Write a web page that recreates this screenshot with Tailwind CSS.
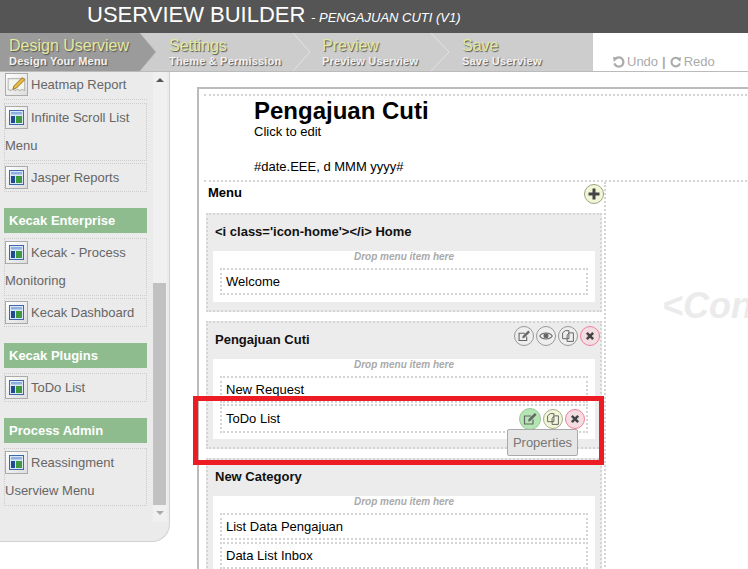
<!DOCTYPE html>
<html><head><meta charset="utf-8"><script src="https://cdn.jsdelivr.net/npm/@tailwindcss/browser@4"></script></head>
<body class="m-0 h-[569px] w-[748px] overflow-hidden bg-white font-['Liberation_Sans',Arial,sans-serif] relative">
<svg class="hidden">
<symbol id="win" viewBox="0 0 15 15"><rect x=".5" y=".5" width="14" height="14" fill="#dbe7f7" stroke="#3d68ad"/><rect x="2" y="2" width="11" height="2.5" fill="#8db0e0"/><rect x="2" y="6" width="4" height="7" fill="#1f4a94"/><rect x="7" y="6" width="6" height="7" fill="#3f9a3f"/></symbol>
<symbol id="edit" viewBox="0 0 20 20"><path d="M13 10.500V15H4.500V7H11" fill="none" stroke="#666" stroke-width="1.200"/><path d="M8 12.500l.6-2.400 6.200-6.200 1.800 1.800-6.200 6.200z" fill="#666"/></symbol>
<symbol id="eye" viewBox="0 0 20 20"><path d="M3 10c3-4.500 11-4.500 14 0-3 4.500-11 4.500-14 0z" fill="none" stroke="#666" stroke-width="1.200"/><circle cx="10" cy="9.800" r="2.800" fill="#666"/></symbol>
<symbol id="copy" viewBox="0 0 20 20"><path d="M4 6.500 7 4h4v9H4z" fill="none" stroke="#666" stroke-width="1.100"/><path d="M9 9l2.500-2.500H16V16H9z" fill="none" stroke="#666" stroke-width="1.100"/></symbol>
<symbol id="x" viewBox="0 0 20 20"><path d="M6.500 6.500l7 7m0-7l-7 7" stroke="#444" stroke-width="2.800" fill="none"/></symbol>
</svg>

<header class="h-[33px] bg-[#555] pl-[87px] text-white leading-[30px] whitespace-nowrap"><span class="text-[22px]">USERVIEW BUILDER</span><span class="text-[13px] italic ml-[2px]"> - PENGAJUAN CUTI (V1)</span></header>

<nav class="h-[39px] flex bg-[#cdcdcd] border-b border-[#bbb] text-[#e3ea9f] [text-shadow:1px_1px_1px_#555] whitespace-nowrap">
  <div class="relative w-[160px] pl-[9px] pt-[3px]">
    <svg class="absolute left-0 top-0" width="160" height="38"><path d="M0 0H140L156 19 140 38H0z" fill="#9b9b9b"/><path d="M140 0 156 19 140 38" fill="none" stroke="#bdbdbd"/></svg>
    <div class="relative text-base leading-[19px]">Design Userview</div><div class="relative text-[11px] font-bold tracking-[0.2px] leading-[13px] text-[#f2f2f2]">Design Your Menu</div>
  </div>
  <div class="relative w-[153px] pl-[9px] pt-[3px]">
    <svg class="absolute left-[133px] top-0" width="20" height="38"><path d="M0 0 17 19 0 38" fill="none" stroke="#e2e2e2"/></svg>
    <div class="text-base leading-[19px]">Settings</div><div class="text-[11px] font-bold tracking-[0.2px] leading-[13px] text-[#f2f2f2]">Theme &amp; Permission</div>
  </div>
  <div class="relative w-[140px] pl-[9px] pt-[3px]">
    <svg class="absolute left-[118px] top-0" width="20" height="38"><path d="M0 0 18 19 0 38" fill="none" stroke="#e2e2e2"/></svg>
    <div class="text-base leading-[19px]">Preview</div><div class="text-[11px] font-bold tracking-[0.2px] leading-[13px] text-[#f2f2f2]">Preview Userview</div>
  </div>
  <div class="w-[139px] pl-[9px] pt-[3px]">
    <div class="text-base leading-[19px]">Save</div><div class="text-[11px] font-bold tracking-[0.2px] leading-[13px] text-[#f2f2f2]">Save Userview</div>
  </div>
  <div class="flex-1 bg-white border-l border-[#ccc] pl-[19px] pt-[20px] flex items-center gap-[2px] text-[13px] text-[#aaa] font-normal [text-shadow:none] leading-[16px]">
    <svg width="13" height="13" viewBox="0 0 14 14"><path d="M3.500 3.200A5 5 0 1 1 2.500 8" fill="none" stroke="#aaa" stroke-width="2.400"/><path d="M1 1 6.500 2 2 6.500z" fill="#aaa"/></svg><span>Undo</span><span class="font-bold mx-[2px]">|</span>
    <svg width="12" height="13" viewBox="0 0 14 14"><path d="M10.500 3.200A5 5 0 1 0 11.500 8" fill="none" stroke="#aaa" stroke-width="2.400"/><path d="M13 1 7.500 2l4.500 4.500z" fill="#aaa"/></svg><span>Redo</span>
  </div>
</nav>

<main class="flex items-start">
  <aside class="relative w-[170px] h-[470px] bg-[#ebebeb] border-r border-b border-[#d2d2d2] rounded-br-[18px] overflow-hidden pl-[4px] text-[13px] text-[#666] leading-[28px] shrink-0">
    <div class="w-[143px] flex flex-col">
      <div class="h-[29px] border-b border-dotted border-[#ccc] -mt-[1px] flex items-center">
        <span class="w-[23px] h-[23px] ml-[1px] mr-[3px] -mt-[2px] border border-[#aaa] bg-gradient-to-br from-white to-[#ddd] inline-flex items-center justify-center"><svg width="20" height="20" viewBox="0 0 17 17"><path d="M1 4h14v10l-2-1-2 1-2-1-2 1-2-1-2 1-2-1z" fill="#f3f6ee" stroke="#bbb"/><path d="M6 10l7-7 2 2-7 7-3 1z" fill="#e8b93c" stroke="#8a6a20" stroke-width=".7"/></svg></span>Heatmap Report
      </div>
      <div class="h-[58px] mt-[3px] border border-dotted border-[#ccc] overflow-hidden"><span class="w-[23px] h-[23px] -mt-[2px] mr-[3px] border border-[#aaa] bg-gradient-to-br from-white to-[#ddd] inline-flex items-center justify-center align-middle"><svg width="15" height="15"><use href="#win"/></svg></span>Infinite Scroll List Menu</div>
      <div class="h-[29px] mt-[2px] border border-dotted border-[#ccc] overflow-hidden"><span class="w-[23px] h-[23px] -mt-[2px] mr-[3px] border border-[#aaa] bg-gradient-to-br from-white to-[#ddd] inline-flex items-center justify-center align-middle"><svg width="15" height="15"><use href="#win"/></svg></span>Jasper Reports</div>
      <div class="h-[25px] mt-[16px] bg-[#8fbc8f] text-white font-bold pl-[5px] leading-[25px]">Kecak Enterprise</div>
      <div class="h-[58px] mt-[5px] border border-dotted border-[#ccc] overflow-hidden"><span class="w-[23px] h-[23px] -mt-[2px] mr-[3px] border border-[#aaa] bg-gradient-to-br from-white to-[#ddd] inline-flex items-center justify-center align-middle"><svg width="15" height="15"><use href="#win"/></svg></span>Kecak - Process Monitoring</div>
      <div class="h-[29px] mt-[2px] border border-dotted border-[#ccc] overflow-hidden"><span class="w-[23px] h-[23px] -mt-[2px] mr-[3px] border border-[#aaa] bg-gradient-to-br from-white to-[#ddd] inline-flex items-center justify-center align-middle"><svg width="15" height="15"><use href="#win"/></svg></span>Kecak Dashboard</div>
      <div class="h-[25px] mt-[16px] bg-[#8fbc8f] text-white font-bold pl-[5px] leading-[25px]">Kecak Plugins</div>
      <div class="h-[29px] mt-[5px] border border-dotted border-[#ccc] overflow-hidden"><span class="w-[23px] h-[23px] -mt-[2px] mr-[3px] border border-[#aaa] bg-gradient-to-br from-white to-[#ddd] inline-flex items-center justify-center align-middle"><svg width="15" height="15"><use href="#win"/></svg></span>ToDo List</div>
      <div class="h-[25px] mt-[16px] bg-[#8fbc8f] text-white font-bold pl-[5px] leading-[25px]">Process Admin</div>
      <div class="h-[58px] mt-[5px] border border-dotted border-[#ccc] overflow-hidden"><span class="w-[23px] h-[23px] -mt-[2px] mr-[3px] border border-[#aaa] bg-gradient-to-br from-white to-[#ddd] inline-flex items-center justify-center align-middle"><svg width="15" height="15"><use href="#win"/></svg></span>Reassingment Userview Menu</div>
    </div>
    <div class="absolute left-[153px] top-0 w-[14px] h-[450px] bg-[#f0f0f0]">
      <div class="absolute left-[3px] top-[6px] w-0 h-0 border-x-[4px] border-x-transparent border-b-[4px] border-b-[#555]"></div>
      <div class="absolute left-0 top-[211px] w-[13px] h-[222px] bg-[#c1c1c1]"></div>
      <div class="absolute left-[3px] top-[439px] w-0 h-0 border-x-[4px] border-x-transparent border-t-[4px] border-t-[#aaa]"></div>
    </div>
  </aside>

  <section class="ml-[27px] mt-[15px] flex-1 h-[600px] border-l-2 border-t-2 border-[#bbb] pt-[5px] pl-[5px] text-black">
    <div class="h-[86px] border-t-2 border-dotted border-[#d4d4d4] pl-[50px] pt-[1px] text-[13px] leading-[14px]">
      <h1 class="text-2xl font-bold leading-[27px]">Pengajuan Cuti</h1>
      <p class="leading-[15px]">Click to edit</p>
      <p class="mt-[21px]">#date.EEE, d MMM yyyy#</p>
    </div>
    <div class="flex border-t-2 border-dotted border-[#d4d4d4]">
      <div class="relative w-[402px] h-[420px] border-r-2 border-dotted border-[#d4d4d4] pl-[2px] shrink-0">
        <div class="pl-[2px] pt-[1px] h-[31px] text-[13px] font-bold">Menu</div>
        <div class="absolute left-[380px] top-[2px] w-[20px] h-[20px] rounded-full border border-[#99a57f] bg-[#f2f6d8] flex items-center justify-center"><svg width="14" height="14" viewBox="0 0 14 14"><path d="M7 1.500v11M1.500 7h11" stroke="#444" stroke-width="3"/></svg></div>

        <div class="w-[396px] h-[99px] border-2 border-dotted border-[#d4d4d4] bg-[#ececec] px-[5px]">
          <div class="h-[36px] pl-[2px] pt-[9px] text-[13px] font-bold leading-[15px] text-[#111]">&lt;i class='icon-home'&gt;&lt;/i&gt; Home</div>
          <div class="h-[51px] bg-white px-[7px]">
            <div class="text-[10px] font-bold italic text-[#aaa] text-center leading-[12px]">Drop menu item here</div>
            <div class="h-[27px] mt-[5px] border-2 border-dotted border-[#d4d4d4] pl-[4px] text-[13px] leading-[23px]">Welcome</div>
          </div>
        </div>

        <div class="relative mt-[9px] w-[396px] h-[128px] border-2 border-dotted border-[#d4d4d4] bg-[#ececec] px-[5px]">
          <div class="h-[36px] pl-[2px] pt-[9px] text-[13px] font-bold leading-[15px] text-[#111]">Pengajuan Cuti</div>
          <div class="absolute left-[306px] top-[3px] flex gap-[2px]">
            <span class="w-[20px] h-[20px] rounded-full border border-[#999] bg-[#eee]"><svg width="18" height="18"><use href="#edit"/></svg></span>
            <span class="w-[20px] h-[20px] rounded-full border border-[#999] bg-[#eee]"><svg width="18" height="18"><use href="#eye"/></svg></span>
            <span class="w-[20px] h-[20px] rounded-full border border-[#999] bg-[#eee]"><svg width="18" height="18"><use href="#copy"/></svg></span>
            <span class="w-[20px] h-[20px] rounded-full border border-[#f0809a] bg-[#f3dde2]"><svg width="18" height="18"><use href="#x"/></svg></span>
          </div>
          <div class="h-[80px] bg-white px-[7px]">
            <div class="text-[10px] font-bold italic text-[#aaa] text-center leading-[12px]">Drop menu item here</div>
            <div class="h-[27px] mt-[5px] border-2 border-dotted border-[#d4d4d4] pl-[4px] text-[13px] leading-[23px]">New Request</div>
            <div class="relative h-[29px] mt-[1px] border-2 border-dotted border-[#d4d4d4] pl-[4px] text-[13px] leading-[25px]">ToDo List
              <div class="absolute left-[297px] top-[2px] flex gap-[2px]">
                <span class="w-[22px] h-[22px] rounded-full border border-[#9cc79c] bg-[#b4e6b4] flex items-center justify-center"><svg width="20" height="20"><use href="#edit"/></svg></span>
                <span class="w-[20px] h-[20px] mt-[1px] rounded-full border border-[#a9ad8a] bg-[#f2f6d8]"><svg width="18" height="18"><use href="#copy"/></svg></span>
                <span class="w-[20px] h-[20px] mt-[1px] rounded-full border border-[#f0809a] bg-[#f3dde2]"><svg width="18" height="18"><use href="#x"/></svg></span>
              </div>
            </div>
          </div>
        </div>

        <div class="mt-[9px] w-[396px] h-[130px] border-2 border-dotted border-[#d4d4d4] bg-[#ececec] px-[5px]">
          <div class="h-[36px] pl-[2px] pt-[9px] text-[13px] font-bold leading-[15px] text-[#111]">New Category</div>
          <div class="h-[90px] bg-white px-[7px]">
            <div class="text-[10px] font-bold italic text-[#aaa] text-center leading-[12px]">Drop menu item here</div>
            <div class="h-[27px] mt-[5px] border-2 border-dotted border-[#d4d4d4] pl-[4px] text-[13px] leading-[24px]">List Data Pengajuan</div>
            <div class="h-[27px] mt-[2px] border-2 border-dotted border-[#d4d4d4] pl-[4px] text-[13px] leading-[24px]">Data List Inbox</div>
          </div>
        </div>
      </div>
      <div class="pl-[56px] pt-[101px] text-[36px] leading-[46px] font-bold italic text-[#ebebeb] whitespace-nowrap">&lt;Content</div>
    </div>
  </section>
</main>

<div class="absolute left-[193px] top-[396px] w-[411px] h-[69px] border-[5px] border-[#ed1c24]"></div>
<div class="absolute left-[507px] top-[429px] w-[71px] h-[27px] bg-[#e6e6e6] border border-[#aaa] rounded-[2px] text-[13px] text-[#777] text-center leading-[25px]">Properties</div>
</body></html>
